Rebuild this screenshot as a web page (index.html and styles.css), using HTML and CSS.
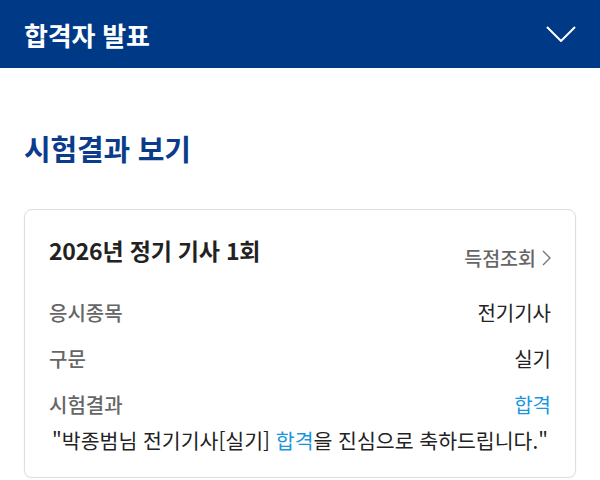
FILE: index.html
```html
<!DOCTYPE html>
<html lang="ko">
  <head>
    <meta charset="UTF-8" />
    <meta name="viewport" content="width=device-width, initial-scale=1.0" />
    <title>합격자 발표</title>
    <link rel="stylesheet" href="styles.css">
  </head>
  <body>
    <header class="topbar">
      <h1>합격자 발표</h1>
      <svg class="toggle" width="30" height="16" viewBox="0 0 30 16">
        <polyline points="1,1 15,15 29,1" fill="none" stroke="#fff" stroke-width="2" />
      </svg>
    </header>

    <main class="content">
      <h2 class="section-title">시험결과 보기</h2>

      <div class="result-card">
        <div class="card-head">
          <div class="exam-name">2026년 정기 기사 1회</div>
          <a class="score-link" href="#">
            득점조회
            <svg class="arrow" width="9" height="16" viewBox="0 0 9 16">
              <polyline points="1,1 8,8 1,15" fill="none" stroke="#777" stroke-width="1.4" />
            </svg>
          </a>
        </div>

        <div class="row">
          <span class="label">응시종목</span>
          <span class="value">전기기사</span>
        </div>
        <div class="row">
          <span class="label">구문</span>
          <span class="value">실기</span>
        </div>
        <div class="row">
          <span class="label">시험결과</span>
          <span class="value pass">합격</span>
        </div>

        <p class="message">"박종범님 전기기사[실기] <span class="pass">합격</span>을 진심으로 축하드립니다."</p>
      </div>
    </main>
  </body>
</html>
```

FILE: styles.css
```css
* {
  margin: 0;
  padding: 0;
  box-sizing: border-box;
}

body {
  font-family: "Noto Sans CJK KR", "Noto Sans", sans-serif;
  background: #fff;
  color: #222;
}

.topbar {
  height: 68px;
  background: #003a87;
  display: flex;
  align-items: center;
  justify-content: space-between;
  padding: 0 24px;
}

.topbar h1 {
  color: #fff;
  font-size: 26px;
  font-weight: 700;
  letter-spacing: -0.2px;
}

.toggle {
  display: block;
}

.content {
  padding: 0 24px;
}

.section-title {
  color: #0b3c8c;
  font-size: 29px;
  font-weight: 700;
  letter-spacing: -0.2px;
  line-height: 40px;
  padding-top: 60px;
}

.result-card {
  margin-top: 41px;
  border: 1px solid #dedede;
  border-radius: 8px;
  box-shadow: 0 1px 2px rgba(0, 0, 0, 0.06);
  padding: 22px 24px 23px;
}

.card-head {
  display: flex;
  justify-content: space-between;
  align-items: flex-start;
  margin-bottom: 17px;
}

.exam-name {
  font-size: 23px;
  font-weight: 700;
  line-height: 36px;
  letter-spacing: -0.2px;
}

.score-link {
  display: flex;
  align-items: center;
  gap: 6px;
  color: #666;
  text-decoration: none;
  font-size: 19.5px;
  font-weight: 500;
  line-height: 30px;
  margin-top: 11px;
}

.arrow {
  display: block;
}

.row {
  display: flex;
  justify-content: space-between;
  font-size: 20px;
  line-height: 46px;
}

.label {
  color: #666;
  font-weight: 500;
}

.value {
  color: #222;
}

.pass {
  color: #1896de;
}

.message {
  text-align: center;
  font-size: 20.5px;
  line-height: 28px;
  margin-top: -2px;
}
```
